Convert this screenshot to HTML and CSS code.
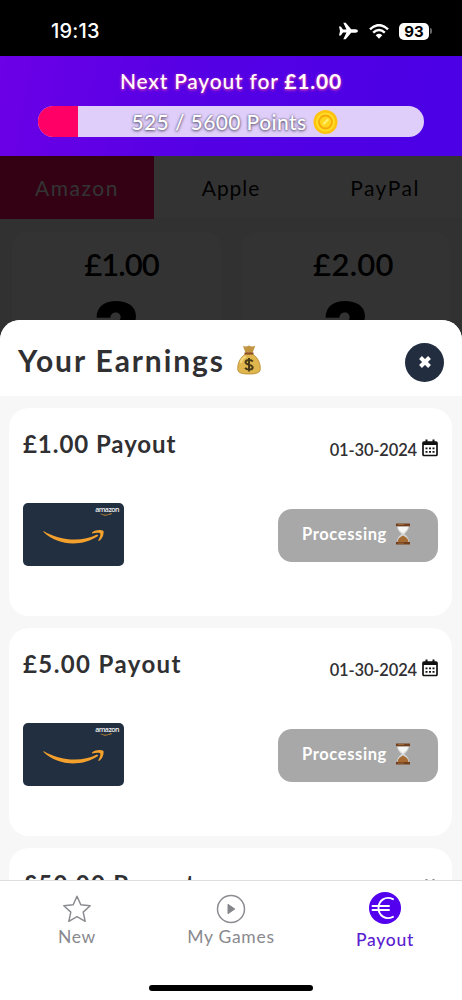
FILE: index.html
```html
<!DOCTYPE html>
<html lang="en">
<head>
<meta charset="utf-8">
<title>Your Earnings</title>
<link rel="stylesheet" href="styles.css">
</head>
<body>
<svg class="defs" width="0" height="0" aria-hidden="true">
  <symbol id="calendar" viewBox="0 0 16 18">
    <path d="M2 3h12q1 0 1 1v11.500q0 1-1 1H2q-1 0-1-1V4q0-1 1-1z" fill="none" stroke="#111" stroke-width="1.700"/>
    <path d="M1 3h14v3H1zM3.500 0.500h2V4h-2zM10.500 0.500h2V4h-2z" fill="#111"/>
    <path d="M3.500 8.500h2v1.800h-2zM7 8.500h2v1.800H7zM10.500 8.500h2v1.800h-2zM3.500 12h2v1.800h-2zM7 12h2v1.800H7zM10.500 12h2v1.800h-2z" fill="#111"/>
  </symbol>
  <symbol id="smile" viewBox="0 0 62 16">
    <path d="M0.500 1C15 10 38 13 54 4.500l1.500 1.200C39 17 15 16 0.500 2z" fill="#f3a02c"/>
    <path d="M49 2.500C53-.5 58-.3 60.500 1c.6 4-1.500 8-4.500 10l-.8-.5C56.500 8 58 4.500 57 3.200c-2-.8-5-.2-8 .2z" fill="#f3a02c"/>
  </symbol>
  <symbol id="hourglass" viewBox="0 0 16 22">
    <path d="M2 2.500h12c0 4-2 6-4.500 8.500C12 13.500 14 15 14 19.500H2C2 15 4 13.500 6.500 11 4 8.500 2 6.500 2 2.500z" fill="#d5d7d8"/>
    <path d="M3 4h10c-.6 3-2.500 4.500-5 6.500C5.500 8.500 3.600 7 3 4z" fill="#f6f6f4"/>
    <path d="M2.500 19c.3-3.500 2.500-5 5.500-6.500 3 1.500 5.200 3 5.500 6.500z" fill="#a66b32"/>
    <path d="M1 .5h14v2.700H1zM1 19h14v2.500H1z" fill="#70401f"/>
    <path d="M3 1.200h6v.8H3zM3 19.700h6v.8H3z" fill="#ad7140"/>
  </symbol>
</svg>
<div class="phone">
  <div class="status">
    <span class="clock">19:13</span>
    <div class="status-icons">
      <svg width="19" height="18" viewBox="0 0 19 18"><path d="M0 4.500h1.800L4 7.500h3.500L4.300.8h2.400L12.200 7.200h4.300q2.300.2 2.500 1.800-.2 1.600-2.500 1.800h-4.300L6.700 17.200H4.300L7.500 10.500H4l-2.200 3H0L1 9z" fill="#fff"/></svg>
      <svg width="20" height="15" viewBox="0 0 20 15"><g fill="none" stroke="#fff" stroke-width="2.500"><path d="M1 5.300Q10-3 19 5.300"/><path d="M4.200 8.700Q10 3.300 15.800 8.700"/></g><path d="M6.700 11.200Q10 8.400 13.300 11.200L10 14.700z" fill="#fff"/></svg>
      <div class="battery"><span class="level">93</span><i class="tip"></i></div>
    </div>
  </div>
  <header class="payout-head">
    <div class="next">Next Payout for <b>£1.00</b></div>
    <div class="bar">
      <div class="fill"></div>
      <div class="points"><span>525 / 5600 Points</span>
        <svg width="25" height="26" viewBox="0 0 25 26"><circle cx="12.500" cy="13" r="12" fill="#ffc211"/><circle cx="12.500" cy="13" r="9.500" fill="#ffdd25"/><circle cx="12.500" cy="13" r="6.500" fill="#ffd51e" stroke="#f5a90a" stroke-width="1.800"/><path d="M9.500 14.500l5-5 1.500 1.500-5 5z" fill="#fff173"/></svg>
      </div>
    </div>
  </header>
  <div class="shop">
    <div class="tabs"><div class="tab active">Amazon</div><div class="tab apple">Apple</div><div class="tab paypal">PayPal</div></div>
    <div class="offers">
      <div class="offer"><div class="price">£1.00</div><div class="mystery">?</div></div>
      <div class="offer"><div class="price two">£2.00</div><div class="mystery">?</div></div>
    </div>
    <div class="dim"></div>
  </div>
  <main class="sheet">
    <div class="sheet-head">
      <h1>Your Earnings</h1>
      <svg class="bag" width="24" height="30" viewBox="0 0 24 30"><path d="M6 .8q3 1.400 6-.3 3 1.700 6.300.2L15.500 8h-7z" fill="#c29543"/><path d="M8.500 9h7C20 12 23.300 17 23.300 23.500 23.300 27.500 20.500 29 12 29S.7 27.500.7 23.500C.7 17 4 12 8.500 9z" fill="#dfb64e" stroke="#b5862d" stroke-width=".8"/><path d="M3.500 18Q5 13 9 11.500" stroke="#f3d77d" stroke-width="2" fill="none"/><path d="M7.500 8.500h9" stroke="#8b4d27" stroke-width="2"/><path d="M15.800 16.500C14.500 14.500 8.500 14.300 8.500 17.300c0 3.200 7.200 1.800 7.200 5 0 3-6.200 3-7.600.4M12 13v13.500" stroke="#453817" stroke-width="1.900" fill="none"/></svg>
      <div class="close"><svg width="14" height="14" viewBox="0 0 14 14"><path d="M2.500 2.500l9 9m0-9l-9 9" stroke="#fff" stroke-width="4"/></svg></div>
    </div>
    <div class="list">
      <section class="card">
        <div class="card-head"><h2>£1.00 Payout</h2><div class="date"><span>01-30-2024</span><svg width="16" height="18"><use href="#calendar"/></svg></div></div>
        <div class="card-body">
          <div class="gift"><span class="brand">amazon</span><svg class="brand-smile" width="12" height="3" viewBox="0 0 62 16"><use href="#smile"/></svg><svg class="smile" width="62" height="16"><use href="#smile"/></svg></div>
          <div class="button"><span>Processing</span><svg width="16" height="22"><use href="#hourglass"/></svg></div>
        </div>
      </section>
      <section class="card">
        <div class="card-head"><h2 class="five">£5.00 Payout</h2><div class="date"><span>01-30-2024</span><svg width="16" height="18"><use href="#calendar"/></svg></div></div>
        <div class="card-body">
          <div class="gift"><span class="brand">amazon</span><svg class="brand-smile" width="12" height="3" viewBox="0 0 62 16"><use href="#smile"/></svg><svg class="smile" width="62" height="16"><use href="#smile"/></svg></div>
          <div class="button"><span>Processing</span><svg width="16" height="22"><use href="#hourglass"/></svg></div>
        </div>
      </section>
      <section class="card">
        <div class="card-head"><h2 class="fifty">£50.00 Payout</h2><div class="date"><span>01-30-2024</span><svg width="16" height="18"><use href="#calendar"/></svg></div></div>
      </section>
    </div>
  </main>
  <nav class="nav">
    <div class="items">
      <div class="item"><svg width="30" height="30" viewBox="0 0 30 30"><path d="M15 2.200l3.800 8.600 9.400 1-7 6.300 2 9.200-8.200-4.700-8.200 4.700 2-9.200-7-6.300 9.400-1z" fill="none" stroke="#8b8c91" stroke-width="1.500" stroke-linejoin="round"/></svg><span class="new">New</span></div>
      <div class="item"><svg width="30" height="30" viewBox="0 0 30 30"><circle cx="15" cy="15" r="13.500" fill="none" stroke="#8b8c91" stroke-width="1.500"/><path d="M12 10.300v9.400l6.800-4.700z" fill="#85868c" stroke="#85868c" stroke-linejoin="round"/></svg><span class="games">My Games</span></div>
      <div class="item current"><svg width="32" height="32" viewBox="0 0 32 32"><circle cx="16" cy="16" r="16" fill="#5200ed"/><path d="M24 7.200C16.500 3.500 9.500 8.500 9.500 16s7 12.500 14.500 8.800M3.500 14H20M3.500 18H20" fill="none" stroke="#fff" stroke-width="1.900" stroke-linecap="round"/></svg><span class="pay">Payout</span></div>
    </div>
    <div class="home"></div>
  </nav>
</div>
</body>
</html>
```
FILE: styles.css
```css
* { box-sizing: border-box; }
body { margin: 0; background: #fff; font-family: Lato, "Open Sans", sans-serif; color: #303033; }
svg { display: block; flex: none; }
.defs { position: absolute; }
.phone { width: 462px; height: 1000px; display: flex; flex-direction: column; overflow: hidden; }
span, h1, h2 { white-space: nowrap; }

.status { height: 56px; flex: none; background: #000; color: #fff; display: flex; justify-content: space-between; padding: 19px 30px 0 51px; }
.clock { font: 500 20px/24px Inter, sans-serif; letter-spacing: 0.2px; }
.status-icons { display: flex; align-items: center; height: 24px; }
.status-icons > svg:nth-child(2) { margin: 0 10px 0 11px; }
.battery { display: flex; align-items: center; gap: 1px; }
.level { width: 30px; height: 17px; border-radius: 5px; background: #fff; color: #000; font: 700 15px/17px Inter, sans-serif; text-align: center; }
.tip { width: 2px; height: 6px; border-radius: 0 3px 3px 0; background: #666; }

.payout-head { height: 100px; flex: none; background: linear-gradient(100deg, #6c00e6, #5400e5 45%, #4b00e5); padding: 11px 38px 0; color: #fff; }
.next { text-align: center; font-size: 21px; line-height: 28px; font-weight: 500; letter-spacing: 0.8px; text-shadow: 0 1px 3px #ff4ca0; white-space: nowrap; }
.bar { height: 31px; margin-top: 11px; border-radius: 16px; overflow: hidden; background: #dfcef9; display: grid; }
.fill { grid-area: 1 / 1; width: 40px; background: #ff0066; }
.points { grid-area: 1 / 1; display: flex; align-items: center; justify-content: center; gap: 6px; padding-left: 7px; font-size: 21px; font-weight: 500; letter-spacing: 0.4px; text-shadow: 0 1px 3px #55496b, 0 0 2px #74698b; }

.shop { height: 194px; flex: none; position: relative; overflow: hidden; background: #f6f6f6; color: #080809; }
.tabs { height: 62px; display: grid; grid-template-columns: repeat(3, 1fr); background: #fff; font-size: 21px; line-height: 63px; text-align: center; }
.tab { letter-spacing: 1.5px; }
.apple { letter-spacing: 0.9px; }
.active { background: #ff0066; color: #fff; }
.offers { display: grid; grid-template-columns: 1fr 1fr; gap: 20px; padding: 14px 12px 0; }
.offer { height: 130px; border-radius: 16px; background: #fff; text-align: center; }
.price { padding: 12px 0 0 10px; font-size: 31px; line-height: 40px; font-weight: 600; letter-spacing: -1px; color: #000; }
.two { padding-left: 16px; letter-spacing: 0.3px; }
.mystery { margin-top: 7px; font: 900 76px/76px Inter, sans-serif; color: #000; }
.dim { position: absolute; inset: 0; background: rgba(0, 0, 0, 0.8); }

.sheet { height: 560px; flex: none; margin-top: -30px; position: relative; overflow: hidden; border-radius: 20px 20px 0 0; background: #f7f7f7; }
.sheet-head { height: 76px; background: #fff; display: flex; align-items: center; padding: 8px 18px 0 18px; }
h1 { margin: -4px 0 0; font-size: 30px; line-height: 40px; font-weight: 700; letter-spacing: 1.9px; }
.bag { margin: -4px 0 0 12px; }
.close { margin-left: auto; width: 39px; height: 39px; border-radius: 50%; background: #222e3f; display: grid; place-items: center; }
.list { padding: 12px 10px 0 9px; display: flex; flex-direction: column; gap: 12px; }
.card { height: 208px; flex: none; border-radius: 20px; background: #fff; padding: 20px 14px 0 14px; }
.card-head { height: 75px; display: flex; justify-content: space-between; align-items: flex-start; }
h2 { margin: -1px 0 0; font-size: 24px; line-height: 34px; font-weight: 700; letter-spacing: 0.95px; }
.five { letter-spacing: 1.4px; }
.fifty { letter-spacing: 1.3px; }
.date { display: flex; gap: 5px; align-items: center; padding-top: 10px; font-size: 16.5px; line-height: 24px; font-weight: 600; letter-spacing: -0.15px; }
.date svg { margin-top: -4px; }
.card-body { display: flex; justify-content: space-between; align-items: center; }
.gift { width: 101px; height: 63px; border-radius: 5px; background: #222f40; display: flex; flex-direction: column; }
.brand { align-self: flex-end; margin: 2px 5px 0 0; color: #f4f4f4; font: 600 7px/9px "Open Sans", sans-serif; letter-spacing: -0.5px; }
.brand-smile { align-self: flex-end; margin: -1px 12px 0 0; }
.smile { margin: 14px 0 0 20px; }
.button { width: 160px; height: 53px; border-radius: 14px; background: #a8a8a8; color: #fff; display: flex; align-items: center; justify-content: center; gap: 8px; font-size: 16.5px; font-weight: 700; letter-spacing: 0.6px; margin-top: 2px; padding: 0 3px 3px 0; }

.nav { height: 120px; flex: none; border-top: 1px solid #dedede; background: #fff; }
.items { height: 104px; display: grid; grid-template-columns: repeat(3, 1fr); color: #88898e; }
.item { display: flex; flex-direction: column; align-items: center; padding-top: 13px; font-size: 17.5px; line-height: 24px; }
.item span { margin-top: 1px; letter-spacing: 0.7px; }
.current { padding-top: 11px; color: #5b20d0; font-weight: 500; }
.item .pay { margin-top: 4px; }
.home { width: 164px; height: 6px; margin: 0 auto; border-radius: 3px; background: #000; }
```
